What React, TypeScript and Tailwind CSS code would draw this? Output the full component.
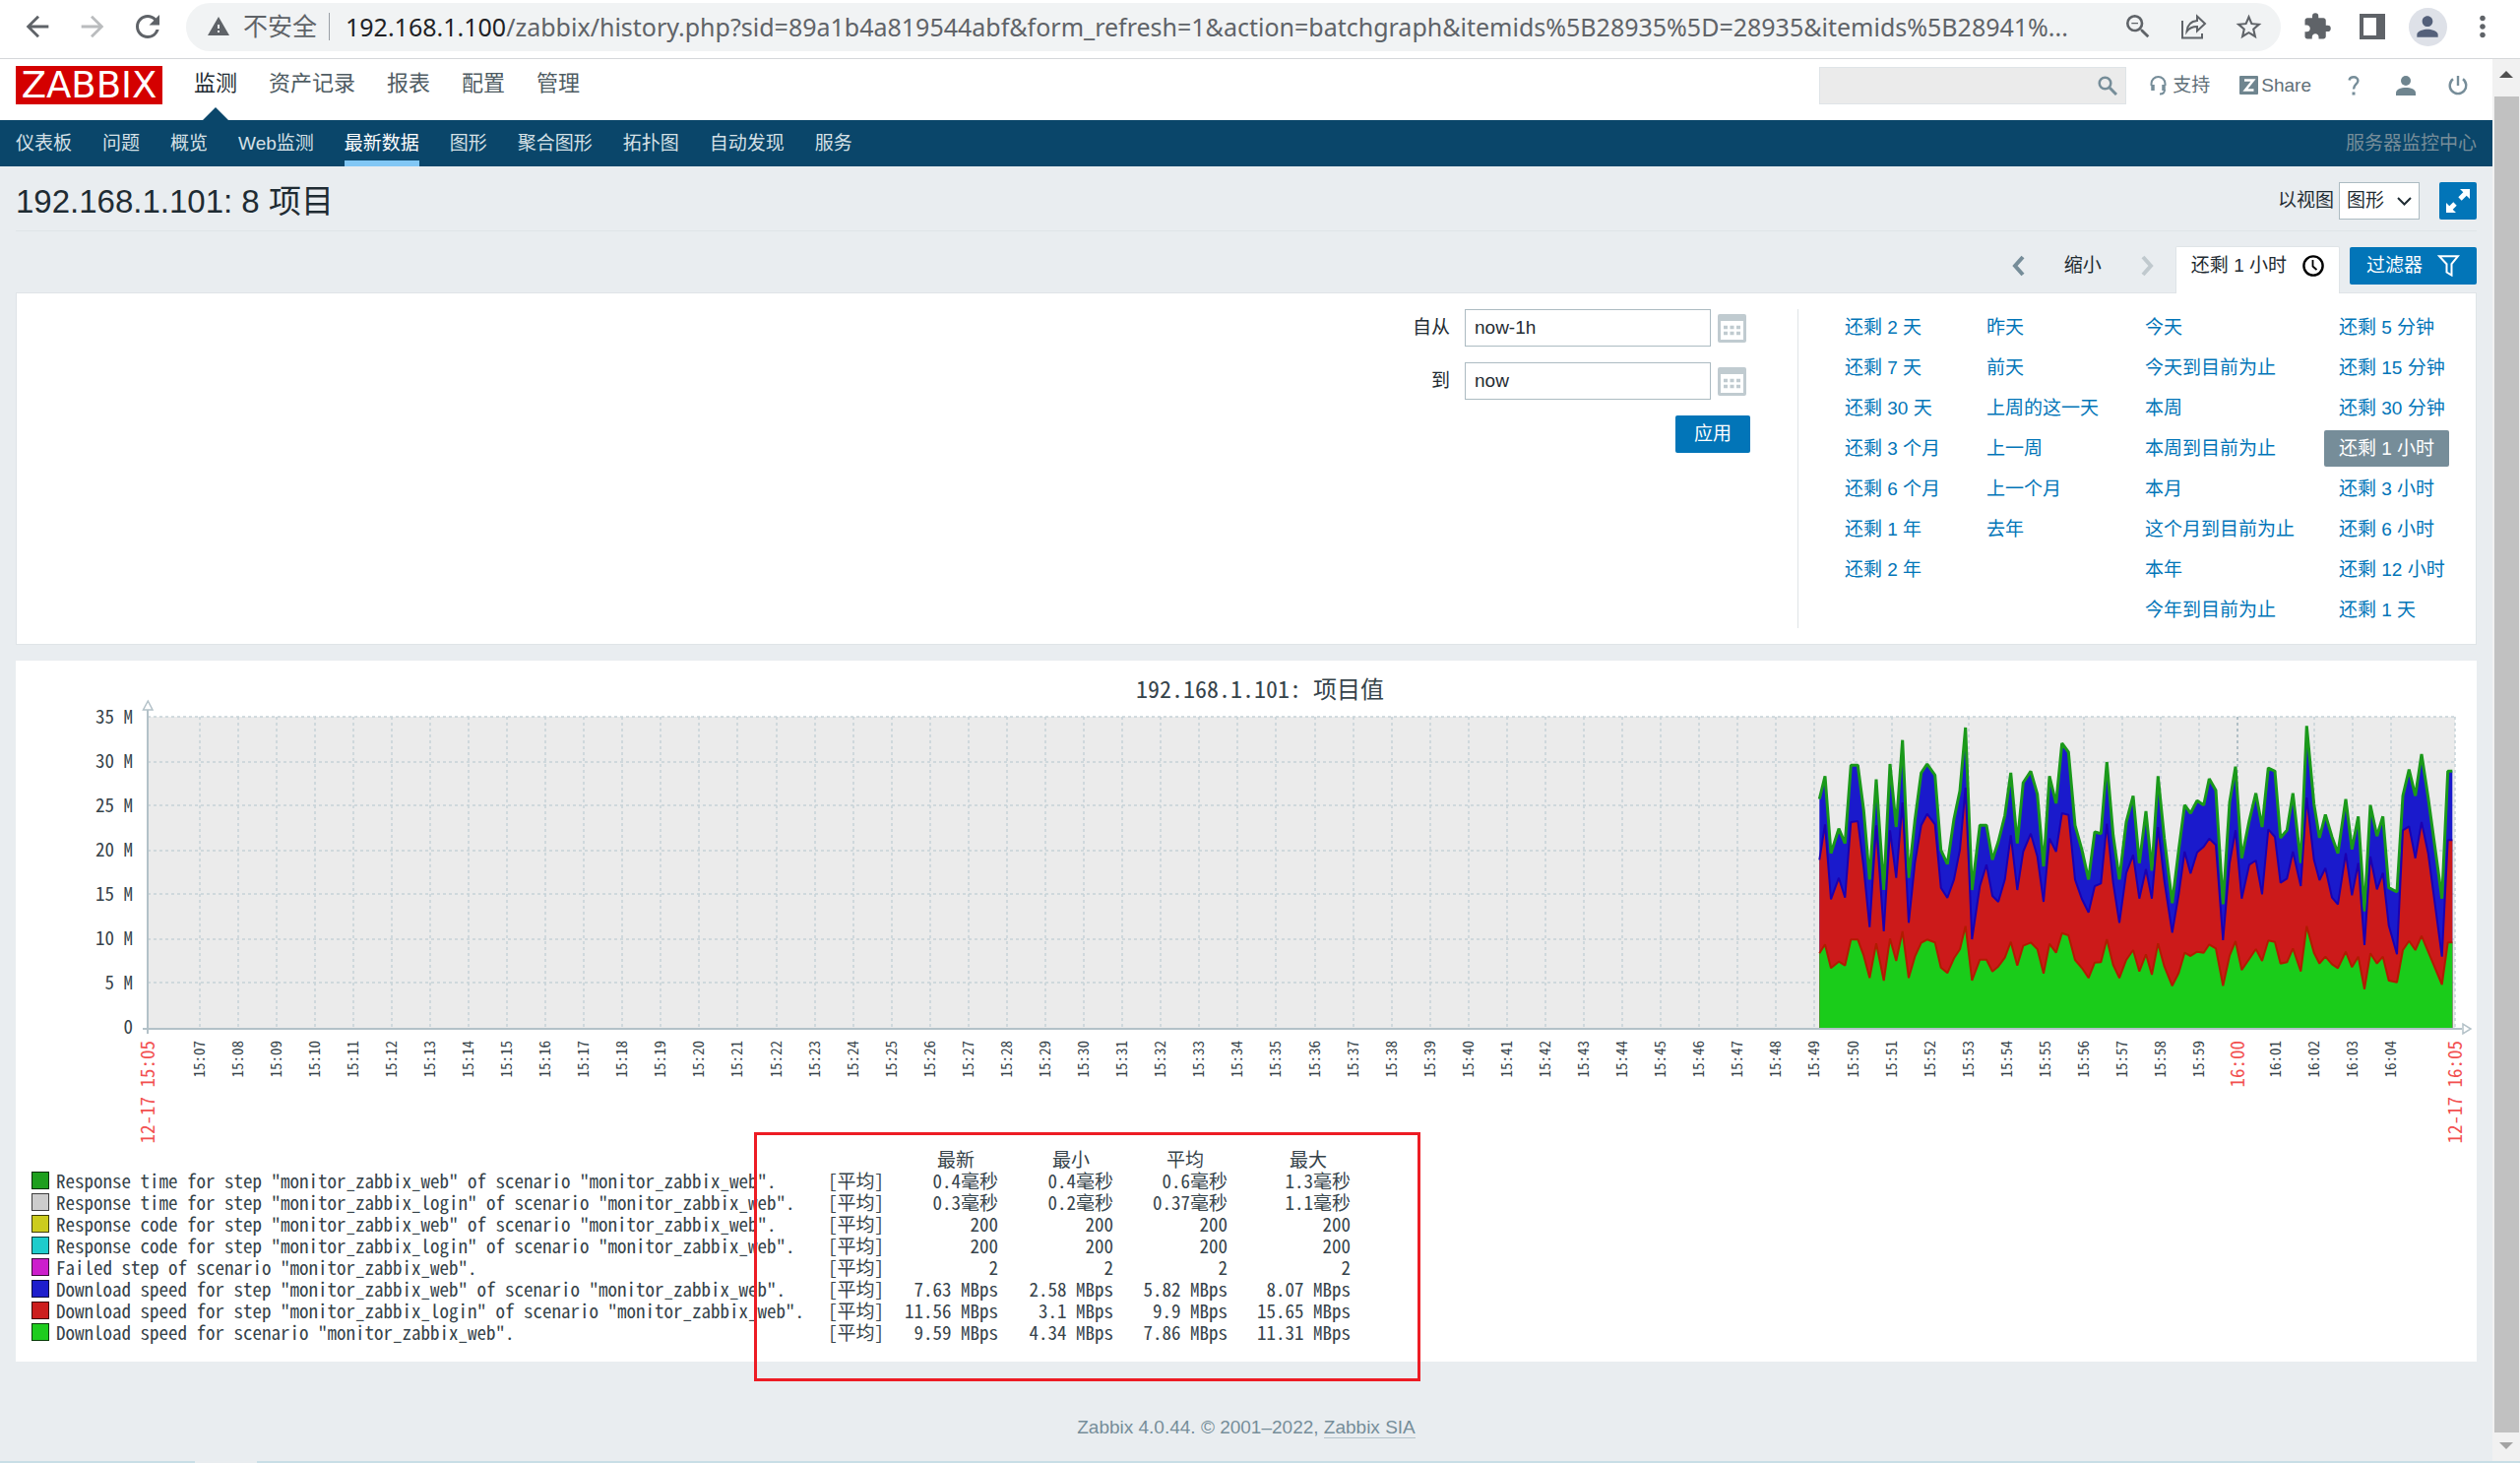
import type { ReactNode } from 'react';
import {
  MdArrowBack, MdArrowForward, MdExtension, MdMoreVert, MdPerson, MdRefresh, MdStarBorder, MdWarning, MdZoomOut,
} from 'react-icons/md';

const MENU = ['监测', '资产记录', '报表', '配置', '管理'];
const SUBMENU = ['仪表板', '问题', '概览', 'Web监测', '最新数据', '图形', '聚合图形', '拓扑图', '自动发现', '服务'];

const RANGES = [
  ['还剩 2 天', '昨天', '今天', '还剩 5 分钟'],
  ['还剩 7 天', '前天', '今天到目前为止', '还剩 15 分钟'],
  ['还剩 30 天', '上周的这一天', '本周', '还剩 30 分钟'],
  ['还剩 3 个月', '上一周', '本周到目前为止', '还剩 1 小时'],
  ['还剩 6 个月', '上一个月', '本月', '还剩 3 小时'],
  ['还剩 1 年', '去年', '这个月到目前为止', '还剩 6 小时'],
  ['还剩 2 年', '', '本年', '还剩 12 小时'],
  ['', '', '今年到目前为止', '还剩 1 天'],
];

interface LegendRow {
  swatch: string;
  name: string;
  values: string[];
}

const LEGEND: LegendRow[] = [
  { swatch: 'bg-[#1e9f1e]', name: 'Response time for step "monitor_zabbix_web" of scenario "monitor_zabbix_web".', values: ['0.4毫秒', '0.4毫秒', '0.6毫秒', '1.3毫秒'] },
  { swatch: 'bg-[#cccccc]', name: 'Response time for step "monitor_zabbix_login" of scenario "monitor_zabbix_web".', values: ['0.3毫秒', '0.2毫秒', '0.37毫秒', '1.1毫秒'] },
  { swatch: 'bg-[#cccc1e]', name: 'Response code for step "monitor_zabbix_web" of scenario "monitor_zabbix_web".', values: ['200', '200', '200', '200'] },
  { swatch: 'bg-[#1ecccc]', name: 'Response code for step "monitor_zabbix_login" of scenario "monitor_zabbix_web".', values: ['200', '200', '200', '200'] },
  { swatch: 'bg-[#cc1ecc]', name: 'Failed step of scenario "monitor_zabbix_web".', values: ['2', '2', '2', '2'] },
  { swatch: 'bg-[#1e1ecc]', name: 'Download speed for step "monitor_zabbix_web" of scenario "monitor_zabbix_web".', values: ['7.63 MBps', '2.58 MBps', '5.82 MBps', '8.07 MBps'] },
  { swatch: 'bg-[#cc1e1e]', name: 'Download speed for step "monitor_zabbix_login" of scenario "monitor_zabbix_web".', values: ['11.56 MBps', '3.1 MBps', '9.9 MBps', '15.65 MBps'] },
  { swatch: 'bg-[#1ecc1e]', name: 'Download speed for scenario "monitor_zabbix_web".', values: ['9.59 MBps', '4.34 MBps', '7.86 MBps', '11.31 MBps'] },
];

// [x, top of stack, login step, scenario], in thirds of a chart unit
const SAMPLES = [
  [145, 335, 520, 805], [162, 265, 412, 778], [180, 500, 640, 850], [204, 425, 575, 830], [223, 470, 635, 842],
  [241, 232, 405, 763], [262, 232, 402, 763], [280, 370, 545, 812], [298, 580, 725, 880], [318, 275, 415, 775],
  [341, 612, 738, 888], [360, 228, 430, 760], [379, 420, 575, 828], [398, 155, 345, 738], [417, 575, 712, 880],
  [436, 400, 530, 815], [455, 255, 415, 773], [473, 228, 380, 763], [497, 262, 412, 772], [515, 490, 605, 848],
  [535, 533, 636, 865], [555, 395, 580, 820], [573, 310, 490, 793], [590, 117, 300, 722], [610, 612, 762, 888],
  [634, 415, 600, 824], [654, 415, 535, 824], [672, 520, 630, 860], [690, 465, 648, 845], [710, 385, 580, 818],
  [728, 255, 445, 770], [748, 470, 612, 842], [766, 285, 495, 782], [789, 250, 440, 772], [809, 320, 510, 792],
  [828, 540, 648, 866], [846, 265, 455, 776], [866, 348, 495, 803], [884, 165, 378, 743], [904, 192, 383, 750],
  [924, 415, 580, 825], [945, 490, 640, 850], [965, 580, 680, 880], [984, 435, 600, 833], [1003, 440, 592, 832],
  [1021, 222, 410, 762], [1040, 445, 590, 840], [1059, 580, 712, 880], [1080, 405, 560, 825], [1101, 325, 505, 795],
  [1120, 530, 638, 860], [1140, 372, 548, 808], [1158, 553, 638, 870], [1177, 265, 420, 775], [1196, 455, 585, 845],
  [1220, 652, 742, 904], [1240, 490, 625, 865], [1258, 353, 495, 803], [1276, 378, 562, 813], [1296, 340, 497, 800],
  [1316, 353, 480, 803], [1333, 273, 455, 778], [1353, 308, 475, 790], [1375, 655, 765, 904], [1395, 345, 530, 812],
  [1413, 236, 430, 768], [1432, 515, 638, 856], [1455, 400, 535, 822], [1475, 317, 522, 792], [1494, 420, 625, 828],
  [1513, 240, 427, 766], [1533, 250, 450, 770], [1550, 453, 590, 836], [1570, 430, 577, 832], [1588, 317, 495, 790],
  [1612, 530, 600, 860], [1630, 112, 330, 722], [1652, 350, 520, 803], [1669, 453, 582, 836], [1687, 382, 545, 815],
  [1707, 450, 635, 838], [1725, 500, 656, 850], [1749, 335, 500, 800], [1768, 488, 628, 847], [1787, 388, 530, 815],
  [1806, 677, 780, 914], [1824, 353, 510, 805], [1844, 448, 610, 836], [1862, 388, 560, 815], [1880, 605, 720, 888],
  [1905, 618, 808, 893], [1923, 325, 430, 795], [1942, 245, 418, 767], [1961, 325, 515, 795], [1980, 198, 405, 752],
  [2000, 330, 500, 800], [2042, 638, 815, 900], [2060, 250, 460, 772], [2074, 250, 460, 772],
];

const LEFT = 134;
const RIGHT = 2478;
const TOP = 57;
const BASE = 374;
const BASE_FONT = "font-['Liberation_Sans','Noto_Sans_CJK_SC',sans-serif]";
const MONO_FONT = "font-['Noto_Sans_Mono_CJK_SC','Liberation_Mono','Noto_Sans_CJK_SC',monospace]";

function line(series: number) {
  return SAMPLES.map((s) => `${(1784 + s[0] / 3).toFixed(1)},${(29 + s[series] / 3).toFixed(1)}`).join(' ');
}

function area(series: number) {
  const first = (1784 + SAMPLES[0][0] / 3).toFixed(1);
  const last = (1784 + SAMPLES[SAMPLES.length - 1][0] / 3).toFixed(1);
  return `${first},${BASE} ${line(series)} ${last},${BASE}`;
}

const MINUTES = Array.from({ length: 58 }, (_, i) => {
  const m = 7 + i;
  const label = m < 60 ? `15:${String(m).padStart(2, '0')}` : `16:${String(m - 60).padStart(2, '0')}`;
  return { label, x: Math.round(186.5 + i * 39.07), hour: m === 60 };
});

function TimeLabel({ x, size, red, children }: { x: number; size: number; red?: boolean; children: ReactNode }) {
  return (
    <text
      transform={`translate(${x + (red ? 7 : 5)} 386) rotate(-90)`}
      textAnchor="end"
      fontSize={size}
      fill={red ? '#f24f4f' : '#36434a'}
    >
      {children}
    </text>
  );
}

function Graph() {
  return (
    <svg viewBox="0 0 2500 495" className={`block w-full ${MONO_FONT}`} role="img" aria-label="192.168.1.101: 项目值">
      <text x="1264" y="38" textAnchor="middle" fontSize="24" fill="#36434a">192.168.1.101: 项目值</text>
      <rect x={LEFT} y={TOP} width={RIGHT - LEFT} height={BASE - TOP} fill="#ebebeb" />
      <g stroke="#c6d2d7" strokeWidth="1.5" strokeDasharray="3 3">
        {[57, 103, 147, 193, 237, 283, 327].map((y) => (
          <line key={y} x1={LEFT} x2={RIGHT} y1={y} y2={y} />
        ))}
        {MINUTES.map((m) => (
          <line key={m.label} x1={m.x} x2={m.x} y1={TOP} y2={BASE} stroke={m.hour ? '#9fb1ba' : '#c6d2d7'} />
        ))}
        <line x1={RIGHT} x2={RIGHT} y1={TOP} y2={BASE} />
      </g>
      {['35 M', '30 M', '25 M', '20 M', '15 M', '10 M', '5 M', '0'].map((label, i) => (
        <text key={label} x="119" y={64 + i * 45} textAnchor="end" fontSize="19" fill="#36434a">{label}</text>
      ))}

      <polygon points={area(1)} fill="#1a1acc" />
      <polyline points={line(1)} fill="none" stroke="#1a991a" strokeWidth="3" strokeLinejoin="bevel" />
      <polygon points={area(2)} fill="#cc1a1a" />
      <polyline points={line(2)} fill="none" stroke="#1c00b0" strokeWidth="2" strokeLinejoin="bevel" />
      <polygon points={area(3)} fill="#1acc1a" />
      <polyline points={line(3)} fill="none" stroke="#b01c00" strokeWidth="2" strokeLinejoin="bevel" />

      <g stroke="#b3c1c8" strokeWidth="2" fill="#fff">
        <line x1={LEFT} x2={LEFT} y1="50" y2="379" />
        <line x1="129" x2="2485" y1={BASE} y2={BASE} />
        <path d="M129.500 50h9.500l-4.700-9z" strokeWidth="1.500" />
        <path d="M2486 369v10l8-5z" strokeWidth="1.500" />
      </g>

      <TimeLabel x={134} size={19} red>12-17 15:05</TimeLabel>
      {MINUTES.map((m) => (
        <TimeLabel key={m.label} x={m.x} size={m.hour ? 19 : 15} red={m.hour}>{m.label}</TimeLabel>
      ))}
      <TimeLabel x={2478} size={19} red>12-17 16:05</TimeLabel>
    </svg>
  );
}

function Legend() {
  return (
    <table className={`ml-4 table-fixed w-[1340px] text-[19px] leading-[22px] text-[#36434a] ${MONO_FONT}`}>
      <colgroup>
        <col className="w-[25px]" />
        <col className="w-[784px]" />
        <col className="w-[60px]" />
        <col className="w-[113px]" />
        <col className="w-[117px]" />
        <col className="w-[116px]" />
        <col className="w-[125px]" />
      </colgroup>
      <thead>
        <tr className="h-[22px]">
          <td colSpan={3} />
          {['最新', '最小', '平均', '最大'].map((h) => (
            <th key={h} scope="col" className="p-0 pr-6 text-right font-normal">{h}</th>
          ))}
        </tr>
      </thead>
      <tbody>
        {LEGEND.map((row) => (
          <tr key={row.name} className="h-[22px]">
            <td className="p-0"><span className={`block size-[18px] border border-black/70 ${row.swatch}`} /></td>
            <td className="p-0 whitespace-nowrap">{row.name}</td>
            <td className="p-0 whitespace-nowrap">[平均]</td>
            {row.values.map((v, i) => (
              <td key={i} className="p-0 text-right whitespace-nowrap">{v}</td>
            ))}
          </tr>
        ))}
      </tbody>
    </table>
  );
}

function BarButton({ label, children }: { label: string; children: ReactNode }) {
  return (
    <button type="button" aria-label={label} className="flex w-14 shrink-0 items-center justify-center">
      {children}
    </button>
  );
}

function BrowserBar() {
  return (
    <div className="flex h-[60px] items-center border-b border-[#d5d7da] bg-white px-[10px] pb-[5px] text-[#5f6368]">
      <BarButton label="后退"><MdArrowBack size={34} /></BarButton>
      <BarButton label="前进"><MdArrowForward size={34} className="text-[#babcbe]" /></BarButton>
      <BarButton label="刷新"><MdRefresh size={36} /></BarButton>
      <div className="ml-[11px] mr-[9px] flex h-[49px] min-w-0 flex-1 items-center rounded-full bg-[#f1f3f4] pl-[21px] pr-[5px]">
        <MdWarning size={24} className="shrink-0" />
        <span className="ml-[13px] shrink-0 text-[25px]">不安全</span>
        <span className="ml-3 h-7 w-px shrink-0 bg-[#9aa0a6]" />
        <span className="ml-4 min-w-0 flex-1 font-['Noto_Sans',sans-serif] text-[25px] leading-10 whitespace-nowrap">
          <span className="text-[#202124]">192.168.1.100</span>
          /zabbix/history.php?sid=89a1b4a819544abf&amp;form_refresh=1&amp;action=batchgraph&amp;itemids%5B28935%5D=28935&amp;itemids%5B28941%...
        </span>
        <BarButton label="缩放"><MdZoomOut size={32} /></BarButton>
        <BarButton label="分享">
          <svg width="28" height="28" viewBox="0 0 28 28" fill="none" stroke="currentColor" strokeWidth="2">
            <path d="M3 8v17.500h20V21" />
            <path d="M18 3.500l8 7.500-8 7.500V14c-4 0-8 1.500-10.500 5C8 12.500 12 8.500 18 8z" />
          </svg>
        </BarButton>
        <BarButton label="收藏"><MdStarBorder size={31} /></BarButton>
      </div>
      <BarButton label="扩展程序"><MdExtension size={30} /></BarButton>
      <BarButton label="侧边栏">
        <svg width="26" height="26" viewBox="0 0 26 26" fill="currentColor">
          <path fillRule="evenodd" d="M0 0h26v26H0zM4 4v18h13V4z" />
        </svg>
      </BarButton>
      <BarButton label="用户">
        <span className="flex size-[39px] items-center justify-center rounded-full bg-[#dee1e8] text-[#54607a]">
          <MdPerson size={32} />
        </span>
      </BarButton>
      <BarButton label="更多"><MdMoreVert size={34} /></BarButton>
    </div>
  );
}

function Header() {
  return (
    <header className="flex h-[62px] items-center bg-white pl-4 pr-[9px] pb-[11px] pt-[2px] text-[19px] text-[#5f6f78]">
      <a href="#" className="flex h-[39px] w-[149px] items-center justify-center bg-[#d40000] font-['DejaVu_Sans',sans-serif] text-[37px] leading-none text-white">
        ZABBIX
      </a>
      <nav className="ml-8 flex gap-8 pb-[3px] text-[22px] text-[#4f5c63]">
        {MENU.map((m, i) => (
          <a key={m} href="#" className={i === 0 ? 'relative text-[#1f2c33]' : ''}>
            {m}
            {i === 0 && (
              <span className="absolute left-1/2 top-[38px] -translate-x-1/2 border-x-[13px] border-b-[13px] border-x-transparent border-b-[#0a466a]" />
            )}
          </a>
        ))}
      </nav>
      <form className="ml-auto flex h-[38px] w-[312px] items-center border border-[#dfe4e7] bg-[#ebebeb] pr-2">
        <input type="text" aria-label="搜索" className="min-w-0 flex-1 bg-transparent px-2 outline-none" />
        <button type="button" aria-label="搜索">
          <svg width="20" height="20" viewBox="0 0 20 20" fill="none" stroke="#768d99" strokeWidth="2.500">
            <circle cx="7.500" cy="7.500" r="5.800" />
            <path d="M12 12l7 7" strokeWidth="3" />
          </svg>
        </button>
      </form>
      <a href="#" className="ml-6 flex items-center gap-[6px]">
        <svg width="17" height="20" viewBox="0 0 17 20" fill="none" stroke="#768d99" strokeWidth="2">
          <path d="M1.500 10V8a7 7 0 0 1 14 0v2" />
          <path d="M3 9v6M14 9v6" strokeWidth="3.500" />
          <path d="M15 14c0 3-2 4.500-5 4.500" />
        </svg>
        支持
      </a>
      <a href="#" className="ml-[30px] flex items-center gap-[3px]">
        <svg width="19" height="19" viewBox="0 0 19 19">
          <rect width="19" height="19" rx="1" fill="#6f858f" />
          <path d="M5 4.500h9L6 14.500h8.500" fill="none" stroke="#fff" strokeWidth="2.500" />
        </svg>
        Share
      </a>
      <a href="#" aria-label="帮助" className="ml-4 flex w-[53px] justify-center">
        <svg width="12" height="20" viewBox="0 0 12 20" fill="none" stroke="#768d99" strokeWidth="2.400">
          <path d="M1.500 4.500C2 2.300 3.700 1.300 6 1.300c2.700 0 4.400 1.500 4.400 3.700C10.400 8.500 6 8.500 6 13.500" />
          <path d="M6 16.500v3" strokeWidth="3" />
        </svg>
      </a>
      <a href="#" aria-label="用户" className="flex w-[53px] justify-center">
        <svg width="20" height="20" viewBox="0 0 20 20" fill="#6f858f">
          <circle cx="10" cy="5" r="5" />
          <path d="M0 20v-2.500C0 13.500 5 12 10 12s10 1.500 10 5.500V20z" />
        </svg>
      </a>
      <a href="#" aria-label="退出" className="flex w-[53px] justify-center">
        <svg width="20" height="20" viewBox="0 0 20 20" fill="none" stroke="#768d99" strokeWidth="2.400">
          <path d="M5 3.200a8.300 8.300 0 1 0 10 0M10 0v10" />
        </svg>
      </a>
    </header>
  );
}

function PageTitle() {
  return (
    <div className="mx-4 flex h-[66px] items-center border-b border-[#dfe4e7] pt-[5px]">
      <h1 className="pt-[2px] text-[33px] leading-10 text-[#1f2c33]">192.168.1.101: 8 项目</h1>
      <label htmlFor="view" className="ml-auto">以视图</label>
      <div className="relative ml-[5px]">
        <select id="view" className="h-[38px] w-[82px] appearance-none border border-[#acbbc2] bg-white pl-[7px]">
          <option>图形</option>
        </select>
        <svg width="15" height="9" viewBox="0 0 15 9" className="pointer-events-none absolute right-2 top-[15px]" fill="none" stroke="#1f2c33" strokeWidth="2">
          <path d="M1 1l6.500 6.500L14 1" />
        </svg>
      </div>
      <button type="button" aria-label="全屏" className="ml-5 flex size-[38px] items-center justify-center rounded-xs bg-[#0275b8]">
        <svg width="24" height="24" viewBox="0 0 24 24" fill="#fff">
          <path d="M14 0h10v10l-3.300-3.300-5 5-3.400-3.400 5-5z" />
          <path d="M0 14v10h10l-3.300-3.300 4-4-3.400-3.400-4 4z" />
        </svg>
      </button>
    </div>
  );
}

function Chevron({ flip }: { flip?: boolean }) {
  return (
    <svg width="14" height="22" viewBox="0 0 14 22" fill="none" stroke={flip ? '#c0c9ce' : '#768d99'} strokeWidth="4">
      <path d={flip ? 'M2 2l8 9-8 9' : 'M12 2l-8 9 8 9'} />
    </svg>
  );
}

function TimeTabs() {
  return (
    <div className="relative mx-4 flex h-[62px] items-end justify-end">
      <div className="flex h-[54px] items-center gap-[27px] pr-2">
        <button type="button" aria-label="上一段" className="flex w-10 justify-center"><Chevron /></button>
        <button type="button">缩小</button>
        <button type="button" aria-label="下一段" className="flex w-10 justify-center"><Chevron flip /></button>
      </div>
      <button type="button" className="-mb-px flex h-12 items-center gap-4 rounded-t-xs border border-b-0 border-[#dfe4e7] bg-white px-[15px] pb-[9px]">
        还剩 1 小时
        <svg width="22" height="22" viewBox="0 0 22 22" fill="none" stroke="#000" strokeWidth="2.400">
          <circle cx="11" cy="11" r="9.600" />
          <path d="M10.500 5v6.500l4 3.500" strokeWidth="1.800" />
        </svg>
      </button>
      <button type="button" className="mb-2 ml-[10px] flex h-[38px] items-center gap-[15px] rounded-xs bg-[#0275b8] px-[17px] text-white">
        过滤器
        <svg width="23" height="22" viewBox="0 0 23 22" fill="none" stroke="#fff" strokeWidth="2">
          <path d="M2 1.200h19l-6.500 8V20.500l-5-3V9.200z" />
        </svg>
      </button>
    </div>
  );
}

function RangeInput({ id, label, value }: { id: string; label: string; value: string }) {
  return (
    <div className="flex items-center">
      <label htmlFor={id} className="mr-[15px]">{label}</label>
      <input id={id} type="text" defaultValue={value} className="h-[38px] w-[250px] border border-[#acbbc2] bg-white px-[9px]" />
      <button type="button" aria-label="日历" className="ml-[7px] mr-1">
        <svg width="29" height="29" viewBox="0 0 29 29">
          <rect width="29" height="29" rx="2" fill="#c0cbd0" />
          <rect x="3" y="7" width="23" height="19" fill="#fff" />
          <path d="M6 13.500h17M6 19.500h17" stroke="#c0cbd0" strokeWidth="3.500" strokeDasharray="4 2.500" />
        </svg>
      </button>
    </div>
  );
}

function FilterPanel() {
  return (
    <div className="mx-4 flex justify-end border border-[#dfe4e7] bg-white py-4 pr-3">
      <form className="flex flex-col items-end gap-4 pr-12">
        <RangeInput id="from" label="自从" value="now-1h" />
        <RangeInput id="to" label="到" value="now" />
        <button type="button" className="h-[38px] rounded-xs bg-[#0275b8] px-[19px] text-white">应用</button>
      </form>
      <div className="grid grid-cols-[144px_161px_197px_142px] gap-y-1 border-l border-[#dfe4e7] pl-8 text-[#0275b8]">
        {RANGES.flat().map((r, i) => (
          <div key={i} className="h-[37px]">
            {r && (
              <a
                href="#"
                className={r === '还剩 1 小时'
                  ? 'inline-block rounded-xs bg-[#768d99] px-[15px] leading-[37px] text-white'
                  : 'inline-block px-[15px] leading-[37px]'}
              >
                {r}
              </a>
            )}
          </div>
        ))}
      </div>
    </div>
  );
}

function Scrollbar() {
  return (
    <div className="flex w-7 shrink-0 flex-col items-center bg-[#f1f1f1]">
      <svg width="14" height="7" viewBox="0 0 14 7" className="mb-[19px] mt-3" fill="#505050"><path d="M0 7l7-7 7 7z" /></svg>
      <div className="w-[25px] flex-1 bg-[#c1c1c1]" />
      <svg width="14" height="7" viewBox="0 0 14 7" className="mb-3 mt-[10px]" fill="#a3a3a3"><path d="M0 0h14l-7 7z" /></svg>
    </div>
  );
}

export default function App() {
  return (
    <div className={`flex min-h-screen flex-col bg-[#e9edf0] text-[19px] leading-7 text-[#1f2c33] ${BASE_FONT}`}>
      <BrowserBar />
      <div className="flex flex-1">
        <div className="flex min-w-0 flex-1 flex-col">
          <Header />
          <nav className="flex h-[47px] items-center gap-[31px] bg-[#0a466a] px-4 text-[#d5e0e6]">
            {SUBMENU.map((s) => (
              <a
                key={s}
                href="#"
                className={s === '最新数据'
                  ? 'flex h-[46px] items-center border-y-[6px] border-t-transparent border-b-[#81c7f5] text-white'
                  : ''}
              >
                {s}
              </a>
            ))}
            <span className="ml-auto text-[#768d99]">服务器监控中心</span>
          </nav>
          <main>
            <PageTitle />
            <TimeTabs />
            <FilterPanel />
            <section className="relative mx-4 mt-4 bg-white pb-[19px]">
              <Graph />
              <Legend />
              <div className="absolute -bottom-5 left-[750px] h-[253px] w-[677px] border-[3px] border-[#ed1c24]" />
            </section>
          </main>
          <footer className="mt-[53px] text-center text-[#768d99]">
            Zabbix 4.0.44. © 2001–2022, <a href="#" className="border-b border-[#b5c3ca]">Zabbix SIA</a>
          </footer>
        </div>
        <Scrollbar />
      </div>
      <div className="flex h-[2px] bg-[#c8dee6]"><div className="ml-[198px] w-[63px] bg-[#e9edf0]" /></div>
    </div>
  );
}
